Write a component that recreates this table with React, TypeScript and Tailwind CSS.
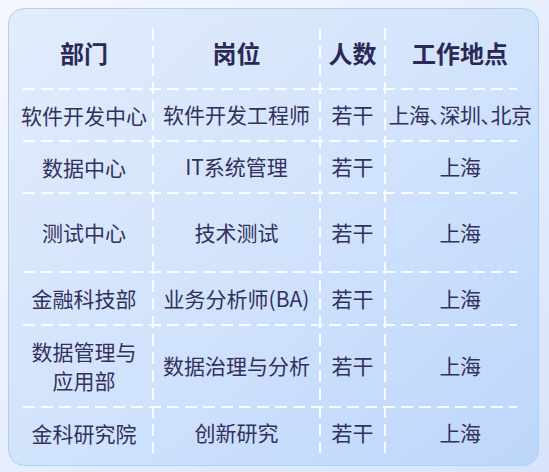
import React from 'react';

type Row = { dept: React.ReactNode; role: string; count: string; place: string; h: string };

const rows: Row[] = [
  { dept: '软件开发中心', role: '软件开发工程师', count: '若干', place: '上海、深圳、北京', h: 'h-[50px]' },
  { dept: '数据中心', role: 'IT系统管理', count: '若干', place: '上海', h: 'h-[50px]' },
  { dept: '测试中心', role: '技术测试', count: '若干', place: '上海', h: 'h-[77px]' },
  { dept: '金融科技部', role: '业务分析师(BA)', count: '若干', place: '上海', h: 'h-[51px]' },
  {
    dept: (
      <>
        数据管理与
        <br />
        应用部
      </>
    ),
    role: '数据治理与分析',
    count: '若干',
    place: '上海',
    h: 'h-[80px]',
  },
  { dept: '金科研究院', role: '创新研究', count: '若干', place: '上海', h: 'h-[50px]' },
];

const cols = ['w-[138px]', 'w-[167px]', 'w-[65px]', 'w-[150px]'];

const HLine = () => (
  <div className="h-[2px] ml-[8px] mr-[18px] bg-[repeating-linear-gradient(90deg,rgba(255,255,255,0.9)_0_12px,transparent_12px_18px)]" />
);

const VLine = ({ left }: { left: string }) => (
  <div
    className={`absolute top-[12px] bottom-[5px] w-[2px] ${left} bg-[repeating-linear-gradient(180deg,rgba(255,255,255,0.9)_0_12px,transparent_12px_18px)]`}
  />
);

export default function App() {
  return (
    <div
      className="w-[549px] h-[472px] bg-gradient-to-br from-[#f6f8fe] to-[#d8e4fb] pt-[8px] pl-[8px]"
      style={{ fontFamily: '"Noto Sans CJK SC", "Noto Sans", sans-serif' }}
    >
      <div className="w-[531px] h-[458px] rounded-[16px] border border-[#a9d2fa] bg-gradient-to-br from-[#e2ecfc] via-[#d2e3fc] to-[#bcd6fb] pt-[7px] pl-[6px]">
        <div className="relative w-[520px]">
          {/* Header */}
          <div className="flex h-[72px] items-center text-[24px] font-bold text-[#2a2857]">
            <div className={`${cols[0]} text-center pt-[2px]`}>部门</div>
            <div className={`${cols[1]} text-center pt-[2px]`}>岗位</div>
            <div className={`${cols[2]} text-center pt-[2px]`}>人数</div>
            <div className={`${cols[3]} text-center pt-[2px]`}>工作地点</div>
          </div>
          {rows.map((r, i) => (
            <React.Fragment key={i}>
              <HLine />
              <div className={`flex ${r.h} items-center text-[21px] text-[#33315c]`}>
                <div className={`${cols[0]} text-center leading-[29px] whitespace-nowrap`}>{r.dept}</div>
                <div className={`${cols[1]} text-center whitespace-nowrap`}>{r.role}</div>
                <div className={`${cols[2]} text-center`}>{r.count}</div>
                <div className={`${cols[3]} flex justify-center`}>
                  <span className="whitespace-nowrap tracking-[-0.5px] [font-feature-settings:'palt']">
                    {r.place}
                  </span>
                </div>
              </div>
            </React.Fragment>
          ))}
          <VLine left="left-[137px]" />
          <VLine left="left-[304px]" />
          <VLine left="left-[369px]" />
        </div>
      </div>
    </div>
  );
}
